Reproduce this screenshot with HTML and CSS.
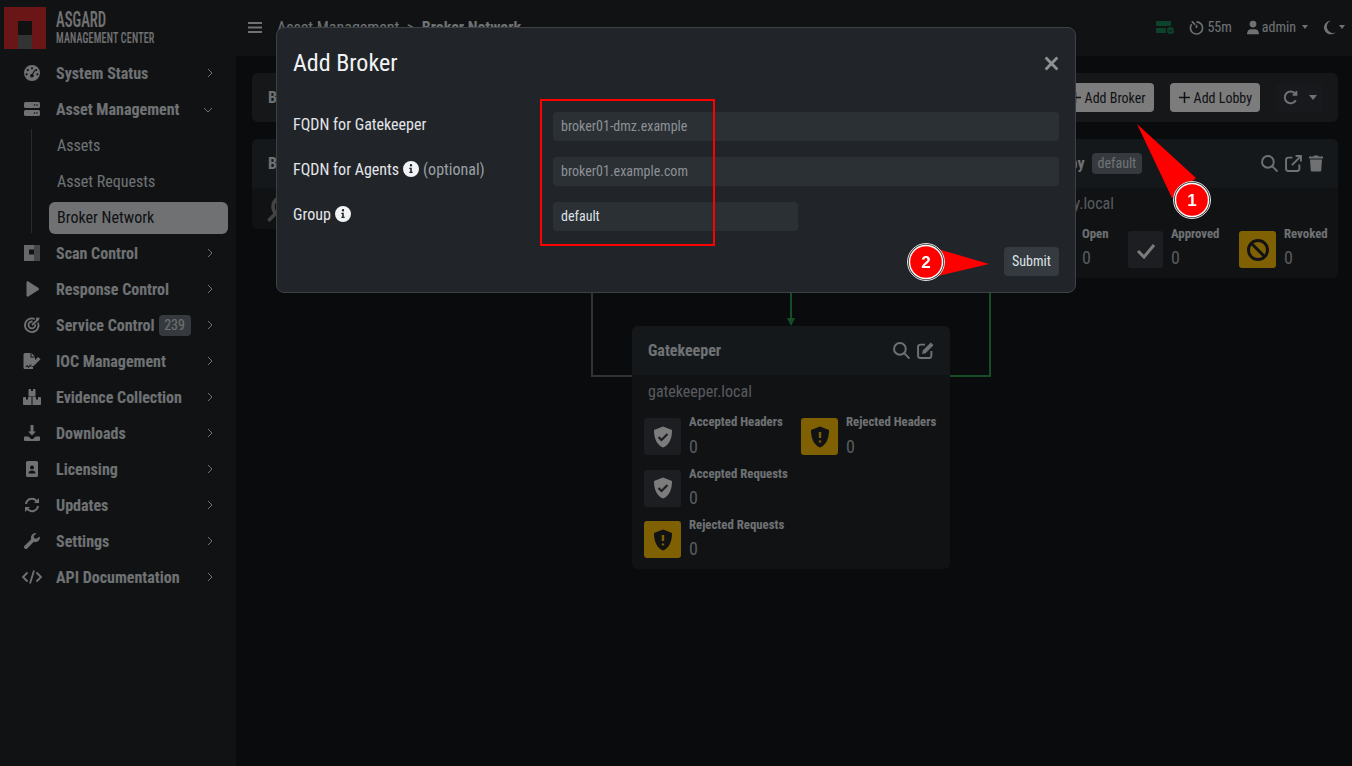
FILE: index.html
```html
<!DOCTYPE html>
<html lang="en">
  <head>
    <meta charset="UTF-8" />
    <meta name="viewport" content="width=device-width, initial-scale=1.0" />
    <title>Broker Network</title>
    <link rel="stylesheet" href="styles.css">
  </head>
  <body>
    <div class="app">
      <aside class="sidebar">
        <div class="brand">
          <div class="logo"><div class="logo-hole"></div></div>
          <div class="brand-text">
            <div class="brand-name">ASGARD</div>
            <div class="brand-sub">MANAGEMENT CENTER</div>
          </div>
        </div>
        <nav class="nav">
          <a class="nav-item">
            <svg class="nav-icon" viewBox="0 0 16 16"><path fill-rule="evenodd" d="M8 0a8 8 0 1 1 0 16A8 8 0 0 1 8 0zM8 2.2a1.1 1.1 0 1 0 0 2.2 1.1 1.1 0 0 0 0-2.2zM3.8 4a1.1 1.1 0 1 0 0 2.2 1.1 1.1 0 0 0 0-2.2zM12.2 4a1.1 1.1 0 1 0 0 2.2 1.1 1.1 0 0 0 0-2.2zM2.6 8.2a1.1 1.1 0 1 0 0 2.2 1.1 1.1 0 0 0 0-2.2zM13.4 8.2a1.1 1.1 0 1 0 0 2.2 1.1 1.1 0 0 0 0-2.2zM10.3 4.9L8.1 9a1.7 1.7 0 1 0 1 .5l2.2-4.1z"/></svg>
            <span class="nav-label">System Status</span>
            <svg class="chev" viewBox="0 0 8 10"><path d="M2 1l4 4-4 4"/></svg>
          </a>
          <a class="nav-item">
            <svg class="nav-icon" viewBox="0 0 16 14"><path fill-rule="evenodd" d="M1.5 0h13A1.5 1.5 0 0 1 16 1.5v3A1.500 1.500 0 0 1 14.500 6h-13A1.500 1.500 0 0 1 0 4.500v-3A1.500 1.500 0 0 1 1.500 0zM1.500 8h13A1.500 1.500 0 0 1 16 9.500v3a1.500 1.500 0 0 1-1.500 1.500h-13A1.500 1.500 0 0 1 0 12.500v-3A1.500 1.500 0 0 1 1.500 8zM10.500 2.200a.8.8 0 1 0 0 1.600.8.8 0 0 0 0-1.600zM13 2.200a.8.8 0 1 0 0 1.600.8.8 0 0 0 0-1.600zM10.500 10.200a.8.8 0 1 0 0 1.600.8.8 0 0 0 0-1.600zM13 10.200a.8.8 0 1 0 0 1.600.8.8 0 0 0 0-1.600z"/></svg>
            <span class="nav-label">Asset Management</span>
            <svg class="chev chev-down" viewBox="0 0 10 8"><path d="M1 2l4 4 4-4"/></svg>
          </a>
          <div class="subnav">
            <a class="sub-item">Assets</a>
            <a class="sub-item">Asset Requests</a>
            <a class="sub-item sub-active">Broker Network</a>
          </div>
          <a class="nav-item">
            <svg class="nav-icon" viewBox="0 0 16 16"><rect width="16" height="16" opacity=".55"/><rect width="10" height="16" opacity=".8"/><rect x="5" y="4.500" width="5" height="5" class="cut"/></svg>
            <span class="nav-label">Scan Control</span>
            <svg class="chev" viewBox="0 0 8 10"><path d="M2 1l4 4-4 4"/></svg>
          </a>
          <a class="nav-item">
            <svg class="nav-icon" viewBox="0 0 16 16"><path d="M2.500 1.500c0-1 1-1.500 1.800-1L14.500 7c.7.500.7 1.500 0 2L4.300 15.500c-.8.500-1.800 0-1.800-1z"/></svg>
            <span class="nav-label">Response Control</span>
            <svg class="chev" viewBox="0 0 8 10"><path d="M2 1l4 4-4 4"/></svg>
          </a>
          <a class="nav-item">
            <svg class="nav-icon nav-icon-line" viewBox="0 0 16 16"><path d="M14 5.500a6.800 6.800 0 1 1-3.300-3.400M11.200 7.200a3.400 3.400 0 1 1-2.600-2.600M8 8l6-5.500"/><path class="tip" d="M12 2.500l.3-2 3.400.2-1 2.500-2.300.2z"/></svg>
            <span class="nav-label">Service Control</span>
            <span class="count">239</span>
            <svg class="chev" viewBox="0 0 8 10"><path d="M2 1l4 4-4 4"/></svg>
          </a>
          <a class="nav-item">
            <svg class="nav-icon nav-icon-wide" viewBox="0 0 18 16"><path d="M2 0h5.500v4.500h4.500v3L8.500 11 8 12.500l-1-1-1.500 2-1.500-1.500-1.500 1.500.7.700.8-.800 1.600 1.600 1.500-2 .8.800H10V16H2a1.500 1.500 0 0 1-1.500-1.500v-13A1.500 1.500 0 0 1 2 0zM8.500 0L12 3.500H8.500zM15 4l2.500 2.200-6.500 6.500-3 .8.900-3z"/></svg>
            <span class="nav-label">IOC Management</span>
            <svg class="chev" viewBox="0 0 8 10"><path d="M2 1l4 4-4 4"/></svg>
          </a>
          <a class="nav-item">
            <svg class="nav-icon nav-icon-wide" viewBox="0 0 18 16"><path d="M5.500 1a1 1 0 0 1 1-1h1.500v2h2V0h1.500a1 1 0 0 1 1 1v6.500h-7zM0 9a1 1 0 0 1 1-1h2v2.500h2V8h3.500v8H1a1 1 0 0 1-1-1zM9.500 8H13v2.500h2V8h2a1 1 0 0 1 1 1v6a1 1 0 0 1-1 1H9.500z"/></svg>
            <span class="nav-label">Evidence Collection</span>
            <svg class="chev" viewBox="0 0 8 10"><path d="M2 1l4 4-4 4"/></svg>
          </a>
          <a class="nav-item">
            <svg class="nav-icon" viewBox="0 0 16 16"><path d="M6.500 0h3v6.500H12L8 10.500 4 6.500h2.500zM1 11.500h3.500L7 14h2l2.500-2.500H15a1 1 0 0 1 1 1V15a1 1 0 0 1-1 1H1a1 1 0 0 1-1-1v-2.500a1 1 0 0 1 1-1z"/></svg>
            <span class="nav-label">Downloads</span>
            <svg class="chev" viewBox="0 0 8 10"><path d="M2 1l4 4-4 4"/></svg>
          </a>
          <a class="nav-item">
            <svg class="nav-icon" viewBox="0 0 16 16"><path fill-rule="evenodd" d="M3.500 0h9A1.500 1.500 0 0 1 14 1.500v13a1.500 1.500 0 0 1-1.500 1.500h-9A1.500 1.500 0 0 1 2 14.500v-13A1.500 1.500 0 0 1 3.500 0zM8 4.500a2 2 0 1 0 0 4 2 2 0 0 0 0-4zM4.500 12.500h7c0-1.800-1.500-3-3.500-3s-3.500 1.200-3.500 3z"/></svg>
            <span class="nav-label">Licensing</span>
            <svg class="chev" viewBox="0 0 8 10"><path d="M2 1l4 4-4 4"/></svg>
          </a>
          <a class="nav-item">
            <svg class="nav-icon nav-icon-line nav-icon-thick" viewBox="0 0 16 16"><path d="M2 7a6 6 0 0 1 10.500-3.200L14.500 5.500M14 9a6 6 0 0 1-10.500 3.200L1.500 10.500"/><path class="tip" d="M15 1v5h-5zM1 15v-5h5z"/></svg>
            <span class="nav-label">Updates</span>
            <svg class="chev" viewBox="0 0 8 10"><path d="M2 1l4 4-4 4"/></svg>
          </a>
          <a class="nav-item">
            <svg class="nav-icon" viewBox="0 0 16 16"><path d="M15.800 3.600a4.500 4.500 0 0 1-6 5.200L3.300 15.400a1.900 1.900 0 0 1-2.700-2.700l6.600-6.500a4.500 4.500 0 0 1 5.200-6L9.600 3l.5 2.300 2.300.5z"/></svg>
            <span class="nav-label">Settings</span>
            <svg class="chev" viewBox="0 0 8 10"><path d="M2 1l4 4-4 4"/></svg>
          </a>
          <a class="nav-item">
            <svg class="nav-icon nav-icon-line nav-icon-code" viewBox="0 0 20 14"><path d="M5.500 2.500L1 7l4.500 4.500M14.500 2.500L19 7l-4.500 4.500M12 .500L8 13.500"/></svg>
            <span class="nav-label">API Documentation</span>
            <svg class="chev" viewBox="0 0 8 10"><path d="M2 1l4 4-4 4"/></svg>
          </a>
        </nav>
      </aside>

      <div class="content">
        <header class="topbar">
          <svg class="burger" viewBox="0 0 14 11"><path d="M0 1h14M0 5.500h14M0 10h14"/></svg>
          <div class="crumbs">
            <span>Asset Management</span>
            <span>&gt;</span>
            <strong>Broker Network</strong>
          </div>
          <div class="top-right">
            <svg class="top-server" viewBox="0 0 18 13"><path d="M1 0h13a1 1 0 0 1 1 1v3a1 1 0 0 1-1 1H1a1 1 0 0 1-1-1V1a1 1 0 0 1 1-1zM1 7h9.500a4.500 4.500 0 0 0-.5 5H1a1 1 0 0 1-1-1V8a1 1 0 0 1 1-1z"/><circle cx="14.500" cy="9.500" r="3.500"/><path class="server-check" d="M12.800 9.500l1.300 1.300 2.200-2.300"/></svg>
            <span class="top-item top-clock">
              <svg class="top-icon" viewBox="0 0 16 16"><circle cx="8" cy="8.500" r="6.500" stroke-dasharray="34 7" transform="rotate(-90 8 8.500)"/><path d="M8 5v3.500M3 1.500l3.500 3.500"/></svg>55m
            </span>
            <span class="top-item top-user">
              <svg class="top-icon top-icon-solid" viewBox="0 0 14 16"><circle cx="7" cy="4" r="4"/><path d="M0 16c0-4 2-6 4.500-6h5C12 10 14 12 14 16z"/></svg>admin<i class="caret"></i>
            </span>
            <span class="top-item top-theme">
              <svg class="top-icon top-icon-solid" viewBox="0 0 14 16"><path d="M8 0a8 8 0 1 0 5.500 13.800A6.500 6.500 0 0 1 8 0z"/></svg><i class="caret"></i>
            </span>
          </div>
        </header>

        <main class="main">
          <div class="toolbar">
            <strong class="toolbar-title">Broker Network</strong>
            <div class="toolbar-actions">
              <button class="btn-light"><svg class="plus" viewBox="0 0 11 11"><path d="M5.500 0v11M0 5.500h11"/></svg>Add Broker</button>
              <button class="btn-light"><svg class="plus" viewBox="0 0 11 11"><path d="M5.500 0v11M0 5.500h11"/></svg>Add Lobby</button>
              <button class="btn-dark">
                <svg class="refresh" viewBox="0 0 14 14"><path d="M12 9.500a5.500 5.500 0 1 1-.5-6M12.500 1v3.500H9"/></svg>
                <i class="caret caret-big"></i>
              </button>
            </div>
          </div>

          <div class="graph">
            <svg class="links" viewBox="0 0 1086 640">
              <path class="link-gray" d="M340 0V237H380"/>
              <path class="link-green" d="M738 0V237H698"/>
              <path class="link-green" d="M539 130V183"/>
              <path class="link-arrow" d="M535 179h8l-4 8z"/>
            </svg>

            <section class="node node-broker">
              <div class="node-head"><strong>Broker</strong></div>
              <div class="node-empty">
                <svg class="big-search" viewBox="0 0 24 24"><circle cx="14" cy="10" r="8"/><path d="M8 16l-6 6"/></svg>
              </div>
            </section>

            <section class="node node-lobby">
              <div class="node-head">
                <strong>Lobby</strong>
                <span class="tag">default</span>
                <span class="node-tools">
                  <svg class="tool" viewBox="0 0 16 16"><circle cx="6.500" cy="6.500" r="5.500"/><path d="M10.500 10.500L15.500 15.500"/></svg>
                  <svg class="tool" viewBox="0 0 16 16"><path d="M7 2.500H3A2 2 0 0 0 1 4.500v8.500a2 2 0 0 0 2 2h8.500a2 2 0 0 0 2-2V9M6.500 9.500L15 1M10 1h5v5"/></svg>
                  <svg class="tool tool-solid" viewBox="0 0 14 16"><path d="M5 0h4l.5 1H14v2H0V1h4.500zM1 4h12l-.8 11a1 1 0 0 1-1 1H2.800a1 1 0 0 1-1-1z"/></svg>
                </span>
              </div>
              <div class="node-host">lobby.local</div>
              <div class="stats stats-lobby">
                <div class="stat">
                  <div class="stat-box"><svg class="stat-icon" viewBox="0 0 24 24"><path class="stat-line" d="M6 12l4 4 8-8"/></svg></div>
                  <div><div class="stat-label">Open</div><div class="stat-value">0</div></div>
                </div>
                <div class="stat">
                  <div class="stat-box"><svg class="stat-icon" viewBox="0 0 24 24"><path class="stat-line" d="M4 13l6 6L20 7"/></svg></div>
                  <div><div class="stat-label">Approved</div><div class="stat-value">0</div></div>
                </div>
                <div class="stat">
                  <div class="stat-box stat-warn"><svg class="stat-icon" viewBox="0 0 24 24"><circle class="ban" cx="12" cy="12" r="9.500"/><path class="ban" d="M5.500 5.500l13 13"/></svg></div>
                  <div><div class="stat-label">Revoked</div><div class="stat-value">0</div></div>
                </div>
              </div>
            </section>

            <section class="node node-gate">
              <div class="node-head">
                <strong>Gatekeeper</strong>
                <span class="node-tools">
                  <svg class="tool" viewBox="0 0 16 16"><circle cx="6.500" cy="6.500" r="5.500"/><path d="M10.500 10.500L15.500 15.500"/></svg>
                  <svg class="tool" viewBox="0 0 16 16"><path d="M7.500 2.500H3a2 2 0 0 0-2 2V13a2 2 0 0 0 2 2h8.500a2 2 0 0 0 2-2V8.500"/><path class="tool-fill" d="M13 .500l2.500 2.500L8 10.500l-3.200.7.700-3.200z"/></svg>
                </span>
              </div>
              <div class="node-host">gatekeeper.local</div>
              <div class="stats">
                <div class="stat">
                  <div class="stat-box"><svg class="stat-icon" viewBox="0 0 24 24"><path class="shield" d="M12 1.500l9 3.500c0 9-3 15-9 17.500C6 20 3 14 3 5z"/><path class="shield-check" d="M7.500 12l3 3 6-6"/></svg></div>
                  <div><div class="stat-label">Accepted Headers</div><div class="stat-value">0</div></div>
                </div>
                <div class="stat">
                  <div class="stat-box stat-warn"><svg class="stat-icon" viewBox="0 0 24 24"><path class="shield-dark" d="M12 1.500l9 3.500c0 9-3 15-9 17.500C6 20 3 14 3 5z"/><path class="shield-mark" d="M12 7v6M12 15.500v2"/></svg></div>
                  <div><div class="stat-label">Rejected Headers</div><div class="stat-value">0</div></div>
                </div>
                <div class="stat stat-wide">
                  <div class="stat-box"><svg class="stat-icon" viewBox="0 0 24 24"><path class="shield" d="M12 1.500l9 3.500c0 9-3 15-9 17.500C6 20 3 14 3 5z"/><path class="shield-check" d="M7.500 12l3 3 6-6"/></svg></div>
                  <div><div class="stat-label">Accepted Requests</div><div class="stat-value">0</div></div>
                </div>
                <div class="stat stat-wide">
                  <div class="stat-box stat-warn"><svg class="stat-icon" viewBox="0 0 24 24"><path class="shield-dark" d="M12 1.500l9 3.500c0 9-3 15-9 17.500C6 20 3 14 3 5z"/><path class="shield-mark" d="M12 7v6M12 15.500v2"/></svg></div>
                  <div><div class="stat-label">Rejected Requests</div><div class="stat-value">0</div></div>
                </div>
              </div>
            </section>
          </div>
        </main>
      </div>
    </div>

    <div class="backdrop"></div>

    <div class="modal">
      <div class="modal-head">
        <h2 class="modal-title">Add Broker</h2>
        <svg class="modal-close" viewBox="0 0 14 14"><path d="M1.500 1.500l11 11M12.500 1.500l-11 11"/></svg>
      </div>
      <form class="modal-form" onsubmit="event.preventDefault();">
        <label class="form-label">FQDN for Gatekeeper</label>
        <input class="form-input" type="text" placeholder="broker01-dmz.example" />
        <label class="form-label">FQDN for Agents
          <svg class="info" viewBox="0 0 16 16"><path fill-rule="evenodd" d="M8 0a8 8 0 1 1 0 16A8 8 0 0 1 8 0zM8 3a1.200 1.200 0 1 0 0 2.400A1.200 1.200 0 0 0 8 3zM6.300 6.800v1.300h.9v2.600h-.9V12h3.400v-1.300h-.9V6.800z"/></svg>
          <span class="optional">(optional)</span>
        </label>
        <input class="form-input" type="text" placeholder="broker01.example.com" />
        <label class="form-label">Group
          <svg class="info" viewBox="0 0 16 16"><path fill-rule="evenodd" d="M8 0a8 8 0 1 1 0 16A8 8 0 0 1 8 0zM8 3a1.200 1.200 0 1 0 0 2.400A1.200 1.200 0 0 0 8 3zM6.300 6.800v1.300h.9v2.600h-.9V12h3.400v-1.300h-.9V6.800z"/></svg>
        </label>
        <input class="form-input form-input-short" type="text" value="default" />
        <div class="form-actions">
          <button class="btn-submit" type="submit">Submit</button>
        </div>
      </form>
    </div>

    <svg class="marks" viewBox="0 0 1352 766">
      <rect class="mark-box" x="541" y="100" width="173" height="145"/>
      <path class="mark-arrow" d="M1137 124L1196 178L1172 198z"/>
      <circle class="mark-ring" cx="1192" cy="200" r="18.500"/>
      <circle class="mark-dot" cx="1192" cy="200" r="16.500"/>
      <text class="mark-num" x="1192" y="206">1</text>
      <path class="mark-arrow" d="M989 264L938 249V276z"/>
      <circle class="mark-ring" cx="926" cy="262" r="18.500"/>
      <circle class="mark-dot" cx="926" cy="262" r="16.500"/>
      <text class="mark-num" x="926" y="268">2</text>
    </svg>
  </body>
</html>
```

FILE: styles.css
```css
* {
  box-sizing: border-box;
}
html,
body {
  height: 100%;
}
body {
  margin: 0;
  overflow: hidden;
  font-family: "Roboto Condensed", "Liberation Sans Narrow", Roboto, sans-serif;
  font-stretch: condensed;
  font-size: 16px;
  background-color: #15171a;
  color: #dee2e6;
}
.app {
  display: flex;
  height: 766px;
}

/* sidebar */
.sidebar {
  width: 236px;
  flex: none;
  background-color: #232529;
}
.brand {
  display: flex;
  height: 55px;
  padding: 7px 0 0 4px;
  gap: 10px;
}
.logo {
  width: 42px;
  height: 42px;
  background-color: #d62c2c;
  display: flex;
  justify-content: center;
  align-items: flex-end;
}
.logo-hole {
  width: 14px;
  height: 28px;
  background: linear-gradient(#222 50%, #666 50%);
}
.brand-text {
  line-height: 1;
  color: #e6e6e6;
  font-weight: 500;
  transform: scaleX(0.67);
  transform-origin: left top;
  white-space: nowrap;
}
.brand-name {
  font-size: 22px;
  margin-top: 2px;
}
.brand-sub {
  font-size: 15px;
  margin-top: 0;
  letter-spacing: 0.3px;
}
.nav-item {
  display: flex;
  align-items: center;
  height: 36px;
  padding-left: 24px;
  font-weight: 700;
  position: relative;
}
.nav-icon {
  width: 16px;
  height: 16px;
  flex: none;
  fill: #dee2e6;
  margin-right: 16px;
  overflow: visible;
}
.nav-icon-wide {
  width: 18px;
  margin: 0 15px 0 -1px;
}
.nav-icon-code {
  width: 20px;
  margin: 0 14px 0 -2px;
}
.nav-icon-line {
  fill: none;
  stroke: #dee2e6;
  stroke-width: 1.8;
}
.nav-icon-thick {
  stroke-width: 2;
}
.nav-icon .tip {
  fill: #dee2e6;
  stroke: none;
}
.nav-icon .cut {
  fill: #232529;
}
.chev {
  position: absolute;
  left: 206px;
  top: 13px;
  width: 8px;
  height: 10px;
  fill: none;
  stroke: #dee2e6;
  stroke-width: 1;
}
.chev-down {
  left: 203px;
  width: 10px;
  height: 8px;
  top: 15px;
}
.count {
  margin-left: 4px;
  width: 32px;
  height: 21px;
  line-height: 21px;
  background-color: #6c757d;
  border-radius: 4px;
  text-align: center;
  font-size: 14px;
  font-weight: 400;
}
.subnav {
  margin: 2px 0 2px 31px;
  padding: 1px 0 0 17px;
  border-left: 1px solid #555;
  width: 197px;
  height: 104px;
}
.sub-item {
  display: block;
  height: 32px;
  line-height: 32px;
  padding-left: 8px;
  margin-bottom: 4px;
  border-radius: 6px;
}
.sub-active {
  background-color: #dee2e6;
  color: #212529;
}

/* top */
.content {
  flex: 1;
  display: flex;
  flex-direction: column;
  min-width: 0;
}
.topbar {
  height: 56px;
  flex: none;
  background-color: #232529;
  display: flex;
  align-items: center;
  padding: 0 7px 2px 12px;
}
.burger {
  width: 14px;
  height: 11px;
  fill: none;
  stroke: #dee2e6;
  stroke-width: 2;
  margin-right: 15px;
}
.crumbs {
  display: flex;
  gap: 7.5px;
  font-size: 16px;
}
.top-right {
  margin-left: auto;
  display: flex;
  align-items: center;
  font-size: 14px;
}
.top-server {
  width: 18px;
  height: 13px;
  fill: #198754;
}
.server-check {
  fill: none;
  stroke: #232529;
  stroke-width: 1;
}
.top-item {
  display: flex;
  align-items: center;
}
.top-clock {
  margin-left: 15px;
  gap: 3px;
}
.top-clock .top-icon {
  width: 15px;
}
.top-user {
  margin-left: 15px;
  gap: 3px;
}
.top-theme {
  margin-left: 16px;
}
.top-icon {
  width: 14px;
  height: 15px;
  fill: none;
  stroke: #dee2e6;
  stroke-width: 1.7;
}
.top-icon-solid {
  fill: #dee2e6;
  stroke: none;
  width: 12px;
}
.caret {
  display: inline-block;
  margin-left: 3px;
  border-top: 4px solid #dee2e6;
  border-left: 3.5px solid transparent;
  border-right: 3.5px solid transparent;
}
.caret-big {
  margin-left: 0;
  border-top-width: 5px;
  border-left-width: 4.5px;
  border-right-width: 4.5px;
}

/* page */
.main {
  flex: 1;
  padding: 17px 14px 0 16px;
}
.toolbar {
  height: 49px;
  background-color: #2a2e33;
  border-radius: 6px;
  display: flex;
  align-items: center;
  padding: 0 15px 0 16px;
}
.toolbar-title {
  font-size: 16px;
}
.toolbar-actions {
  margin-left: auto;
  display: flex;
  gap: 16px;
}
.btn-light {
  display: flex;
  align-items: center;
  gap: 4px;
  height: 29px;
  padding: 0 8px 0 9px;
  border: 0;
  border-radius: 4px;
  background-color: #f8f9fa;
  color: #212529;
  font: inherit;
  font-size: 14px;
}
.plus {
  width: 11px;
  height: 11px;
  fill: none;
  stroke: #212529;
  stroke-width: 1.5;
}
.btn-dark {
  width: 47px;
  height: 29px;
  border: 0;
  border-radius: 4px;
  background-color: #2f3338;
  display: flex;
  align-items: center;
  justify-content: center;
  gap: 11px;
}
.refresh {
  width: 15px;
  height: 15px;
  fill: none;
  stroke: #dee2e6;
  stroke-width: 1.8;
}
.graph {
  position: relative;
  height: 640px;
  margin-top: 17px;
}
.links {
  position: absolute;
  left: 0;
  top: 0;
  width: 1086px;
  height: 640px;
  fill: none;
}
.link-gray {
  stroke: #666;
  stroke-width: 2;
}
.link-green {
  stroke: #2a9a4e;
  stroke-width: 2;
}
.link-arrow {
  fill: #2a9a4e;
}
.node {
  position: absolute;
  background-color: #232529;
  border-radius: 6px;
}
.node-broker {
  left: 0;
  top: 0;
  width: 300px;
  height: 90px;
}
.node-lobby {
  left: 776px;
  top: 0;
  width: 310px;
  height: 139px;
}
.node-gate {
  left: 380px;
  top: 187px;
  width: 318px;
  height: 243px;
}
.node-head {
  height: 49px;
  background-color: #2b3136;
  border-radius: 6px 6px 0 0;
  display: flex;
  align-items: center;
  padding: 0 15px 0 16px;
}
.node-gate .node-head {
  padding-right: 16px;
}
.tag {
  margin-left: 7px;
  height: 21px;
  line-height: 21px;
  padding: 0 6px;
  border-radius: 4px;
  font-size: 14px;
  background-color: #6c757d;
}
.node-tools {
  margin-left: auto;
  display: flex;
  gap: 7px;
}
.tool {
  width: 17px;
  height: 17px;
  fill: none;
  stroke: #dee2e6;
  stroke-width: 1.8;
}
.tool-solid {
  fill: #dee2e6;
  stroke: none;
  width: 14px;
}
.tool-fill {
  fill: #dee2e6;
  stroke: none;
}
.node-empty {
  padding: 7px 14px;
}
.big-search {
  width: 28px;
  height: 28px;
  fill: none;
  stroke: #888;
  stroke-width: 3;
}
.node-host {
  padding: 5px 16px 0;
  height: 31px;
  color: #adb5bd;
  line-height: 24px;
}
.node-lobby .node-head,
.node-lobby .node-host {
  padding-left: 18px;
}
.node-lobby .node-host {
  padding-top: 4px;
}
.stats {
  display: grid;
  grid-template-columns: 157px 1fr;
  padding: 0 12px;
  row-gap: 14.6px;
  margin-top: 12px;
}
.stats-lobby {
  display: flex;
  padding-left: 11px;
}
.stats-lobby .stat {
  width: 89px;
  flex: none;
}
.stats-lobby .stat:nth-child(2) {
  width: 111px;
}
.stats-lobby .stat-box {
  width: 35px;
}
.stats-lobby .stat-warn {
  width: 37px;
}
.stats-lobby .stat-label {
  margin-top: -4px;
}
.stats-lobby .stat-value {
  margin-top: 6px;
}
.stat-wide {
  grid-column: 1 / -1;
}
.stat {
  display: flex;
  gap: 8px;
  height: 37px;
}
.stat-box {
  width: 37px;
  height: 37px;
  flex: none;
  border-radius: 3px;
  background-color: #383d44;
  display: flex;
  align-items: center;
  justify-content: center;
}
.stat-warn {
  background-color: #ffc107;
}
.stat-icon {
  width: 24px;
  height: 24px;
  fill: none;
}
.shield {
  fill: #f8f9fa;
}
.shield-check {
  stroke: #383d44;
  stroke-width: 2.2;
}
.shield-dark {
  fill: #212529;
}
.shield-mark {
  stroke: #ffc107;
  stroke-width: 2.4;
}
.stat-line {
  stroke: #f8f9fa;
  stroke-width: 3;
}
.ban {
  stroke: #212529;
  stroke-width: 3;
}
.stat-label {
  font-size: 12.8px;
  font-weight: 700;
  line-height: 14px;
  margin-top: -3px;
  white-space: nowrap;
}
.stat-value {
  font-size: 18px;
  line-height: 22px;
  margin-top: 7px;
  color: #adb5bd;
}
.stat-wide .stat-value {
  margin-top: 6px;
}

/* dialog */
.backdrop {
  position: fixed;
  inset: 0;
  background-color: rgba(0, 0, 0, 0.5);
}
.modal {
  position: fixed;
  left: 276px;
  top: 27px;
  width: 800px;
  height: 266px;
  background-color: #212529;
  border: 1px solid #3d4145;
  border-radius: 8px;
}
.modal-head {
  height: 70px;
  display: flex;
  align-items: center;
  justify-content: space-between;
  padding: 0 16px;
}
.modal-title {
  margin: 0;
  font-size: 24px;
  font-weight: 400;
  color: #f1f3f5;
}
.modal-close {
  width: 15px;
  height: 15px;
  fill: none;
  stroke: #8f9193;
  stroke-width: 2.6;
}
.modal-form {
  display: grid;
  grid-template-columns: 260px 506px;
  grid-auto-rows: 29px;
  row-gap: 16px;
  padding: 14px 16px 0;
  align-items: center;
}
.form-label {
  color: #e3e6e9;
  display: flex;
  align-items: center;
  gap: 4px;
  margin-top: -5px;
}
.form-input {
  height: 29px;
  border: 0;
  border-radius: 4px;
  background-color: #2b3035;
  padding: 0 8px 2px;
  font: inherit;
  font-size: 14px;
  color: #dee2e6;
}
.form-input::placeholder {
  color: #8b9197;
  opacity: 1;
}
.form-input-short {
  width: 245px;
}
.form-actions {
  grid-column: 1 / -1;
  display: flex;
  justify-content: flex-end;
}
.btn-submit {
  width: 55px;
  height: 29px;
  padding: 0 0 2px;
  border: 0;
  border-radius: 4px;
  background-color: #343a40;
  color: #dee2e6;
  font: inherit;
  font-size: 14px;
}
.info {
  width: 16px;
  height: 16px;
  fill: #f1f3f5;
}
.optional {
  color: #9aa0a6;
}

/* tutorial marks drawn on top of the shot */
.marks {
  position: fixed;
  left: 0;
  top: 0;
  width: 1352px;
  height: 766px;
}
.mark-box {
  fill: none;
  stroke: #f00;
  stroke-width: 2;
}
.mark-arrow {
  fill: #f00;
}
.mark-ring {
  fill: #333;
  stroke: #ddd;
  stroke-width: 1;
}
.mark-dot {
  fill: #f00;
  stroke: #fff;
  stroke-width: 1.4;
}
.mark-num {
  fill: #fff;
  font-family: "Liberation Sans", Arial, sans-serif;
  font-stretch: normal;
  font-size: 17px;
  font-weight: 700;
  text-anchor: middle;
}
```
